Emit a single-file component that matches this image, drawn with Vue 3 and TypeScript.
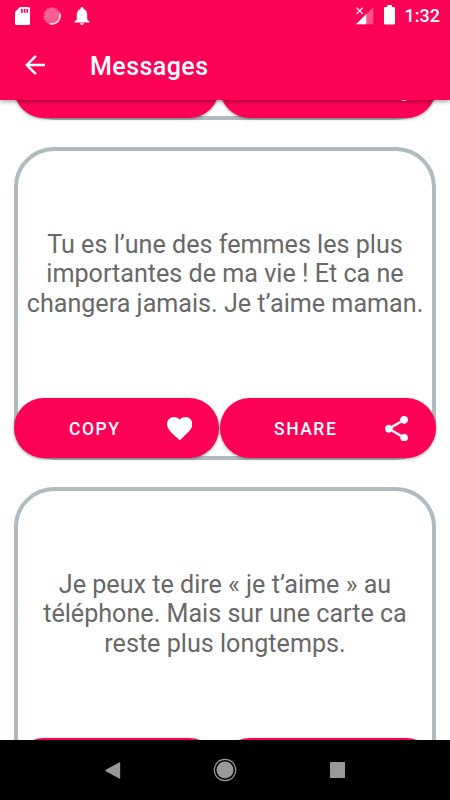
<script setup lang="ts">
interface Message {
  id: number
  lines: string[]
}

const messages: Message[] = [
  { id: 1, lines: [] },
  {
    id: 2,
    lines: [
      'Tu es l’une des femmes les plus',
      'importantes de ma vie ! Et ca ne',
      'changera jamais. Je t’aime maman.',
    ],
  },
  {
    id: 3,
    lines: [
      'Je peux te dire « je t’aime » au',
      'téléphone. Mais sur une carte ca',
      'reste plus longtemps.',
    ],
  },
]
</script>

<template>
  <div class="screen">
    <header class="top">
      <div class="status">
        <svg class="sd" viewBox="0 0 15 18" width="15" height="18">
          <path d="M5 0h8.500a1.500 1.500 0 0 1 1.500 1.500v15a1.500 1.500 0 0 1-1.500 1.500h-12A1.500 1.500 0 0 1 0 16.500V5z" fill="#fff" />
          <path d="M6.900 2v3.700M9.600 2v3.700M12.300 2v3.700" stroke="#ff0057" stroke-width="1.700" />
        </svg>
        <svg class="sync" viewBox="0 0 18 18" width="18" height="18">
          <circle cx="9" cy="9" r="7.200" fill="#ff5e95" />
          <circle cx="9" cy="9" r="7.800" fill="none" stroke="#ff8bb3" stroke-width="1.700" stroke-dasharray="1.300 .8" />
          <path d="M16.600 6.500A8 8 0 0 1 7 16.700" fill="none" stroke="#ffe3ed" stroke-width="1.600" />
        </svg>
        <svg class="bell" viewBox="0 0 16 18" width="16" height="18">
          <path d="M8 0c.9 0 1.500.6 1.500 1.400v.5C12 2.600 13.200 4.800 13.200 7.400v5L15.500 14.600v1H.5v-1l2.300-2.200v-5c0-2.600 1.200-4.800 3.700-5.500v-.5C6.500.6 7.100 0 8 0zM6.100 16.300h3.800C9.900 17.300 9 18 8 18s-1.900-.7-1.900-1.700z" fill="#fff" />
        </svg>
        <span class="spacer"></span>
        <svg class="signal" viewBox="0 0 18 18" width="18" height="18">
          <path d="M17.300 0v17.300H0z" fill="#ff4f8c" />
          <path d="M10.300 7v10.300H0z" fill="#fff" />
          <path d="M-.2-.2h7.600v7.400h-7.600z" fill="#ff0057" />
          <path d="M.6.600l6.200 6.200M6.800.600L.6 6.800" stroke="#fff" stroke-width="1.200" />
        </svg>
        <svg class="battery" viewBox="0 0 12 20" width="12" height="20">
          <path d="M3.400 0h4.400v2h1.900a1.300 1.300 0 0 1 1.300 1.300v14.900a1.300 1.300 0 0 1-1.300 1.300H1.300A1.300 1.300 0 0 1 0 18.200V3.300A1.300 1.300 0 0 1 1.300 2h2.100z" fill="#fff" />
        </svg>
        <span class="clock">1:32</span>
      </div>
      <div class="toolbar">
        <svg class="back" viewBox="4 4 16 16" width="20" height="20">
          <path d="M20 11H7.830l5.590-5.590L12 4l-8 8 8 8 1.410-1.410L7.830 13H20v-2z" fill="#fff" />
        </svg>
        <h1>Messages</h1>
      </div>
    </header>

    <main class="viewport">
      <div class="list">
        <article v-for="message in messages" :key="message.id" class="card">
          <p class="text">
            <span v-for="line in message.lines" :key="line" class="line">{{ line }}</span>
          </p>
          <div class="actions">
            <button class="copy" type="button">
              <span class="label">COPY</span>
              <svg viewBox="2 3 20 18.350" width="25.500" height="23.300">
                <path d="M12 21.350l-1.450-1.320C5.400 15.360 2 12.280 2 8.500 2 5.420 4.420 3 7.500 3c1.740 0 3.410.810 4.500 2.090C13.090 3.810 14.760 3 16.500 3 19.580 3 22 5.420 22 8.500c0 3.780-3.400 6.860-8.550 11.540L12 21.350z" fill="#fff" />
              </svg>
            </button>
            <button class="share" type="button">
              <span class="label">SHARE</span>
              <svg viewBox="3 2 18 19.920" width="23" height="25.400">
                <path d="M18 16.080c-.760 0-1.440.300-1.960.770L8.910 12.700c.050-.230.090-.460.090-.700s-.040-.470-.090-.700l7.050-4.110c.540.500 1.250.810 2.040.810 1.660 0 3-1.340 3-3s-1.340-3-3-3-3 1.340-3 3c0 .240.040.470.090.700L8.040 9.810C7.500 9.310 6.790 9 6 9c-1.660 0-3 1.340-3 3s1.340 3 3 3c.790 0 1.500-.310 2.040-.810l7.120 4.160c-.050.210-.080.430-.080.650 0 1.610 1.310 2.920 2.920 2.920s2.920-1.310 2.920-2.920-1.310-2.920-2.920-2.920z" fill="#fff" stroke="#fff" stroke-width=".25" />
              </svg>
            </button>
          </div>
        </article>
      </div>
    </main>

    <nav class="navbar">
      <svg viewBox="0 0 16 17" width="16" height="17">
        <path d="M14.200.500Q15.200 0 15.200 1v15q0 1-1 .5L.8 9.300q-1-.8 0-1.600z" fill="#999" />
      </svg>
      <svg viewBox="0 0 24 24" width="24" height="24">
        <circle cx="12" cy="12" r="10.700" fill="none" stroke="#999" stroke-width="1.200" />
        <circle cx="12" cy="12" r="8.500" fill="#999" />
      </svg>
      <svg viewBox="0 0 16 16" width="16" height="16">
        <rect x="0" y="0" width="15" height="16" rx=".5" fill="#999" />
      </svg>
    </nav>
  </div>
</template>

<style>
body {
  margin: 0;
  overflow: hidden;
}
</style>

<style scoped>
.screen {
  width: 450px;
  height: 800px;
  display: flex;
  flex-direction: column;
  background: #fff;
  font-family: Roboto, 'Liberation Sans', sans-serif;
  overflow: hidden;
}
svg {
  display: block;
  flex: none;
}
.top {
  height: 100px;
  flex: none;
  background: #ff0057;
  box-shadow: 0 1px 5px rgba(0, 0, 0, 0.45);
  z-index: 1;
}
.status {
  height: 31px;
  display: flex;
  align-items: center;
  padding: 0 10px 0 15px;
  box-sizing: border-box;
}
.sync {
  margin-left: 13px;
}
.bell {
  margin-left: 13px;
}
.spacer {
  flex: 1;
}
.battery {
  margin: -1px 0 0 10px;
}
.clock {
  margin-left: 8.300px;
  color: #fff;
  font-size: 18px;
  font-weight: 500;
  line-height: 31px;
}
.toolbar {
  height: 69px;
  display: flex;
  align-items: center;
  padding: 0 25px;
}
.back {
  margin-top: -1px;
}
h1 {
  margin: 2px 0 0 45px;
  color: #fff;
  font-size: 25px;
  font-weight: 500;
  line-height: 30px;
  letter-spacing: 0.450px;
}
.viewport {
  height: 640px;
  overflow: hidden;
}
.list {
  display: flex;
  flex-direction: column;
  gap: 27px;
  margin-top: -293px;
  padding: 0 14px;
}
.card {
  height: 313px;
  flex: none;
  box-sizing: border-box;
  border: 4px solid #b0bbbf;
  border-radius: 40px;
  display: flex;
  flex-direction: column;
}
.text {
  flex: 1;
  margin: 0 -4px;
  padding-bottom: 1.500px;
  display: flex;
  flex-direction: column;
  justify-content: center;
  text-align: center;
  font-size: 25.130px;
  line-height: 29.600px;
  color: #686868;
}
.line {
  white-space: nowrap;
}
.actions {
  display: flex;
  gap: 0.300px;
  margin: 0 -4px -2.400px;
}
button {
  height: 60px;
  box-sizing: border-box;
  border: 0;
  border-radius: 30px;
  background: #ff0057;
  color: #fff;
  display: flex;
  align-items: center;
  justify-content: space-between;
  font-family: inherit;
  box-shadow: 0 1px 3px rgba(0, 0, 0, 0.4);
}
.copy {
  width: 205.300px;
  padding: 0 27px 0 55px;
}
.share {
  flex: 1;
  padding: 0 28px 0 54.500px;
}
.label {
  padding-top: 1.500px;
  font-size: 17.500px;
  font-weight: 500;
  letter-spacing: 1.500px;
}
.navbar {
  height: 60px;
  flex: none;
  background: #000;
  display: flex;
  align-items: center;
  justify-content: space-between;
  padding: 0 104.500px;
}
</style>
